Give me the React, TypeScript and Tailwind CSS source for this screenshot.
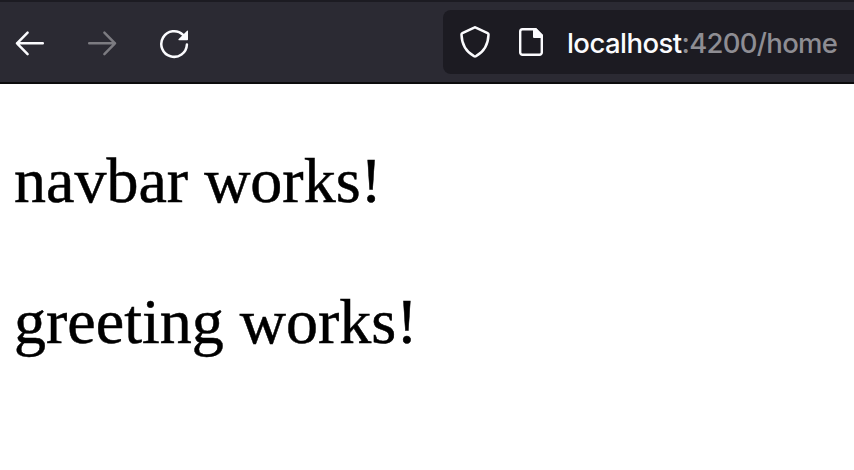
function BackIcon() {
  return (
    <svg className="h-8 w-8" viewBox="0 0 32 32" fill="none" stroke="currentColor" strokeWidth="2.5" strokeLinecap="round" strokeLinejoin="round">
      <path d="M28.8 16.3H3M13.6 5.7 3 16.3l10.6 10.8" />
    </svg>
  );
}

function ForwardIcon() {
  return (
    <svg className="h-8 w-8" viewBox="0 0 32 32" fill="none" stroke="currentColor" strokeWidth="2.5" strokeLinecap="round" strokeLinejoin="round">
      <path d="M3.2 16.3H29M18.4 5.7 29 16.3 18.4 27.1" />
    </svg>
  );
}

function ReloadIcon() {
  return (
    <svg className="h-8 w-8" viewBox="0 0 32 32" fill="none">
      <path d="M28.9 17.6A12.8 12.8 0 1 1 25.1 7.9" stroke="currentColor" strokeWidth="2.5" strokeLinecap="round" />
      <path d="M29.1 3.7Q30 2.9 30 4.1V12.4Q30 13.2 29.2 13.2H21.2Q19.6 13.2 20.7 11.9Z" fill="currentColor" />
    </svg>
  );
}

function ShieldIcon() {
  return (
    <svg className="h-8 w-8" viewBox="0 0 32 32" fill="none" stroke="currentColor" strokeWidth="2.5" strokeLinejoin="round">
      <path d="M15.2 1.6Q16 1.1 16.8 1.6L28.6 7.2Q29.6 7.7 29.5 8.8C29.2 17 26.5 25 17 30.2Q16 30.8 15 30.2C5.5 25 2.8 17 2.5 8.8Q2.4 7.7 3.4 7.2Z" />
    </svg>
  );
}

function PageIcon() {
  return (
    <svg className="h-8 w-8" viewBox="0 0 32 32" fill="none">
      <path d="M20.5 3.2H7.5A2.3 2.3 0 0 0 5.2 5.5V26.5A2.3 2.3 0 0 0 7.5 28.8H24.5A2.3 2.3 0 0 0 26.8 26.5V9.5Z" stroke="currentColor" strokeWidth="2.4" strokeLinejoin="round" />
      <path d="M18 2h3L28 9V12H19a1 1 0 0 1-1-1Z" fill="currentColor" />
    </svg>
  );
}

export default function App() {
  return (
    <div className="h-[470px] w-[854px] overflow-hidden bg-white">
      <header className="flex h-[84px] items-center border-t-2 border-b-2 border-t-[#1c1b22] border-b-[#0c0c0d] bg-[#2b2a33] pl-3.5 text-[#fbfbfe]">
        <nav className="flex gap-10 pt-0.5">
          <button aria-label="Back"><BackIcon /></button>
          <button aria-label="Forward" className="text-[#7c7b81]"><ForwardIcon /></button>
          <button aria-label="Reload"><ReloadIcon /></button>
        </nav>
        <div className="ml-[253px] flex h-16 flex-1 items-center rounded-l-lg bg-[#1c1b22] pl-4">
          <ShieldIcon />
          <div className="ml-6"><PageIcon /></div>
          <div className="ml-5 pt-1 whitespace-nowrap font-['Inter',sans-serif] text-[27.5px] font-medium tracking-[-0.7px] text-[#8e8d93]">
            <span className="tracking-[-0.56px] text-[#fbfbfe]">localhost</span>:4200/home
          </div>
        </div>
      </header>
      <main className="pl-3.5 pt-[60px] font-['Liberation_Serif',serif] text-[64px] leading-[73px] text-black [-webkit-text-stroke:0.5px_black]">
        <p>navbar works!</p>
        <p className="mt-[68px]">greeting works!</p>
      </main>
    </div>
  );
}
